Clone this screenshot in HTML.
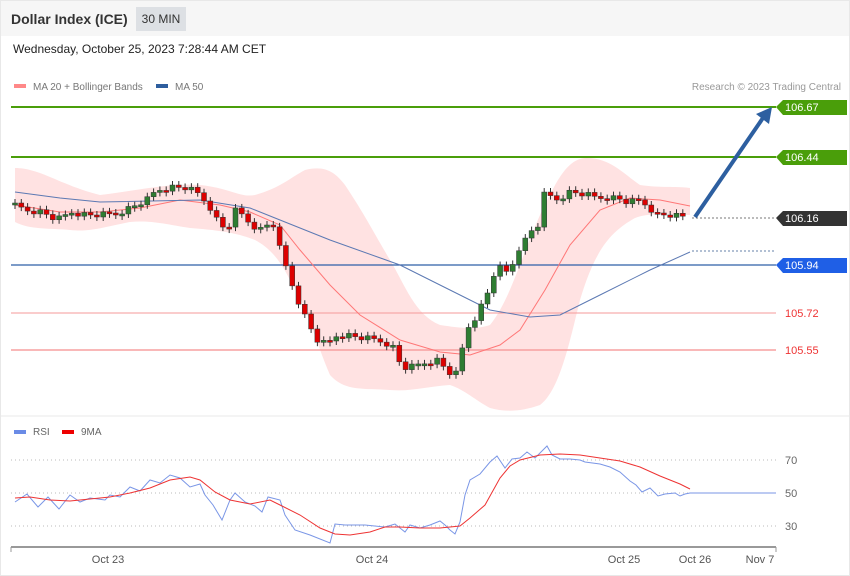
<!DOCTYPE html>
<html><head><meta charset="utf-8"><style>
body{margin:0;width:850px;height:576px;background:#fff;font-family:"Liberation Sans",sans-serif;overflow:hidden;position:relative}
.frame{position:absolute;left:0;top:0;width:848px;height:574px;border:1px solid #e8e8e8}
.hdr{position:absolute;left:1px;top:1px;width:848px;height:35px;background:#f6f6f6}
.t{position:absolute;left:11px;top:11px;font-size:14px;font-weight:bold;color:#333}
.tag{position:absolute;left:136px;top:7px;width:50px;height:24px;background:#dde0e4;font-size:12px;line-height:24px;text-align:center;color:#333}
.date{position:absolute;left:13px;top:42px;font-size:12px;color:#222}
svg{position:absolute;left:0;top:0}
</style></head><body>
<div class="frame"></div>
<div class="hdr"></div>
<div class="t">Dollar Index (ICE)</div>
<div class="tag">30 MIN</div>
<div class="date">Wednesday, October 25, 2023 7:28:44 AM CET</div>
<svg width="850" height="576" font-family="Liberation Sans, sans-serif">
<rect x="14" y="84" width="12" height="4" fill="#f88"/>
<text x="33" y="90" font-size="10" fill="#777">MA 20 + Bollinger Bands</text>
<rect x="156" y="84" width="12" height="4" fill="#2e5e9e"/>
<text x="175" y="90" font-size="10" fill="#777">MA 50</text>
<text x="841" y="90" font-size="10" fill="#999" text-anchor="end">Research © 2023 Trading Central</text>
<path fill="#ffe2e2" d="M15,168 C40,168 60,185 100,195 C140,190 170,183 200,185 C230,188 240,198 255,195 C280,188 290,178 305,170 C325,165 335,172 345,185 C365,215 375,235 390,260 C405,285 415,315 440,325 C460,328 475,330 490,325 C510,300 520,260 540,215 C555,185 565,160 585,158 C610,157 625,175 640,185 C660,188 675,186 690,188 L690,215 C670,215 650,212 635,218 C610,232 595,250 580,300 C570,340 560,390 540,405 C520,412 505,412 490,408 C475,400 465,390 450,385 C430,386 410,392 390,390 C365,388 345,392 330,375 C315,340 305,300 290,280 C280,260 270,248 255,240 C235,232 215,230 190,228 C165,224 150,220 130,222 C100,228 90,232 70,230 C50,228 30,230 15,222 Z"/>
<line x1="11" y1="107" x2="776" y2="107" stroke="#4a9e0a" stroke-width="2"/>
<line x1="11" y1="157" x2="776" y2="157" stroke="#4a9e0a" stroke-width="2"/>
<line x1="11" y1="265" x2="776" y2="265" stroke="#2d5fa8" stroke-width="1.2"/>
<line x1="11" y1="313" x2="776" y2="313" stroke="#f49a9a" stroke-width="1"/>
<line x1="11" y1="350" x2="776" y2="350" stroke="#f7a0a0" stroke-width="1.5"/>
<line x1="692" y1="218" x2="776" y2="218" stroke="#777" stroke-dasharray="2,2"/>
<line x1="692" y1="251" x2="776" y2="251" stroke="#6680aa" stroke-dasharray="2,2"/>
<polyline fill="none" stroke="#f77" stroke-width="1" points="15,205 60,212 100,212 140,208 180,200 220,205 250,212 280,225 300,250 330,285 360,315 400,340 440,352 470,355 500,345 520,330 545,290 570,245 600,210 630,198 660,200 690,206"/>
<polyline fill="none" stroke="#5c79b3" stroke-width="1" points="15,192 60,198 100,202 200,200 250,208 280,220 330,240 400,265 450,290 490,310 530,317 560,315 600,295 650,270 690,252"/>
<g id="c"></g>
<line x1="695" y1="217" x2="765" y2="115" stroke="#2d5fa0" stroke-width="4"/>
<polygon points="772,107 756,114 769,124" fill="#2d5fa0"/>
<g font-size="11" fill="#fff">
<polygon points="776,107 783,100 847,100 847,115 783,115" fill="#4a9e0a"/><text x="785" y="111">106.67</text>
<polygon points="776,157 783,150 847,150 847,165 783,165" fill="#4a9e0a"/><text x="785" y="161">106.44</text>
<polygon points="776,218 783,211 847,211 847,226 783,226" fill="#333"/><text x="785" y="222">106.16</text>
<polygon points="776,265 783,258 847,258 847,273 783,273" fill="#1f5fe6"/><text x="785" y="269">105.94</text>
<text x="785" y="317" fill="#e33">105.72</text>
<text x="785" y="354" fill="#e33">105.55</text>
</g>
<line x1="1" y1="416" x2="849" y2="416" stroke="#e8e8e8"/>
<rect x="14" y="430" width="12" height="4" fill="#6a8be6"/><text x="33" y="435" font-size="10" fill="#666">RSI</text>
<rect x="62" y="430" width="12" height="4" fill="#e00"/><text x="81" y="435" font-size="10" fill="#666">9MA</text>
<g stroke="#bbb" stroke-dasharray="1,3"><line x1="11" y1="460" x2="776" y2="460"/><line x1="11" y1="493" x2="776" y2="493"/><line x1="11" y1="526" x2="776" y2="526"/></g>
<g font-size="11" fill="#666"><text x="785" y="464">70</text><text x="785" y="497">50</text><text x="785" y="530">30</text></g>
<polyline fill="none" stroke="#7a96e6" stroke-width="1" points="15,502 27,494 38,507 48,497 59,509 70,495 80,502 90,498 105,500 110,495 120,497 130,487 140,491 150,480 160,483 170,475 180,478 190,487 200,484 205,495 213,505 222,520 230,500 235,493 245,502 255,506 262,512 268,497 280,500 285,515 295,530 310,535 330,543 335,524 345,525 365,525 385,527 395,524 405,532 410,525 420,528 430,525 440,521 445,525 450,530 455,534 460,522 465,495 470,480 480,474 490,462 497,456 505,468 512,459 520,458 527,452 535,458 547,446 552,455 560,459 570,459 580,460 585,462 600,464 610,467 620,472 630,481 636,485 642,492 650,488 658,496 665,494 675,493 680,496 685,494 690,493 776,493"/>
<polyline fill="none" stroke="#e33" stroke-width="1" points="15,498 30,497 50,500 70,501 90,499 110,497 130,493 150,488 170,480 190,477 200,480 215,492 230,500 250,504 270,500 280,505 300,515 320,528 335,534 350,535 370,532 385,527 400,527 420,528 440,528 460,526 470,518 485,505 500,478 510,466 520,460 540,455 560,454 580,455 600,458 620,461 640,467 660,476 680,484 690,489"/>
<line x1="11" y1="547" x2="776" y2="547" stroke="#999" stroke-width="2"/>
<line x1="11" y1="547" x2="11" y2="552" stroke="#999"/><line x1="776" y1="547" x2="776" y2="552" stroke="#999"/>
<g font-size="11" fill="#555" text-anchor="middle"><text x="108" y="563">Oct 23</text><text x="372" y="563">Oct 24</text><text x="624" y="563">Oct 25</text><text x="695" y="563">Oct 26</text><text x="760" y="563">Nov 7</text></g>
</svg>
<script>
var p=[[15,205],[30,210],[45,212],[60,220],[75,212],[90,215],[105,215],[120,213],[135,207],[150,200],[160,190],[175,187],[190,188],[200,193],[212,205],[220,220],[230,232],[237,210],[245,215],[255,225],[265,230],[275,220],[283,250],[290,270],[297,290],[305,310],[312,325],[320,340],[330,345],[340,335],[350,335],[365,338],[380,340],[395,345],[405,368],[415,367],[430,362],[440,360],[450,370],[458,378],[465,350],[472,325],[480,315],[487,300],[493,288],[498,270],[505,268],[512,275],[520,250],[527,242],[535,230],[541,225],[547,195],[555,197],[562,200],[570,192],[580,193],[590,195],[600,198],[610,197],[620,198],[632,203],[640,200],[650,205],[660,215],[670,215],[685,217],[690,218]];
function y(x){for(var i=1;i<p.length;i++)if(x<=p[i][0]){var a=p[i-1],b=p[i];return a[1]+(b[1]-a[1])*(x-a[0])/(b[0]-a[0]);}return 218;}
var g=document.getElementById('c'),s='',prev=y(15),k=0;
for(var x=15;x<=689;x+=6.3){var c=y(x+3)+((k*37)%7-3);var o=prev;var up=c<o;var t=Math.min(o,c),h=Math.max(Math.abs(c-o),2);
s+='<line x1="'+x+'" x2="'+x+'" y1="'+(t-4)+'" y2="'+(t+h+4)+'" stroke="#333" stroke-width="1"/>';
s+='<rect x="'+(x-2.5)+'" y="'+t+'" width="5" height="'+h+'" fill="'+(up?'#2e7d32':'#d00')+'" stroke="#333" stroke-width=".5"/>';prev=c;k++;}
g.innerHTML=s;
</script>
</body></html>
